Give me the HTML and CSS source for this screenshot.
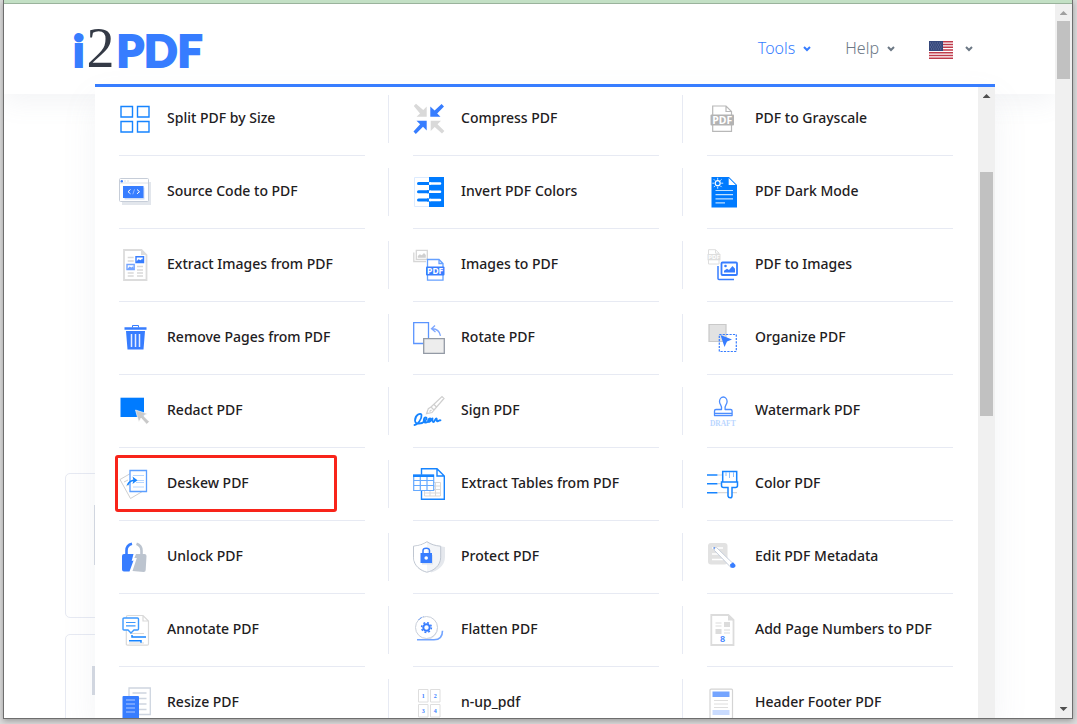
FILE: index.html
```html
<!DOCTYPE html>
<html lang="en">
<head>
<meta charset="utf-8">
<title>i2PDF</title>
<link rel="stylesheet" href="styles.css">
</head>
<body>
<div class="window">
  <div class="window-strip"></div>
  <div class="viewport">
    <div class="page">
      <header class="header">
        <a class="logo" href="#"><span>i</span><span class="logo-two">2</span><span>PDF</span></a>
        <nav class="nav">
          <button class="nav-item active" type="button">Tools <svg class="chevron" viewBox="0 0 8 6"><path d="M1 1l3 3 3-3"/></svg></button>
          <button class="nav-item" type="button">Help <svg class="chevron" viewBox="0 0 8 6"><path d="M1 1l3 3 3-3"/></svg></button>
          <button class="nav-item flag-item" type="button" aria-label="Language">
            <svg class="flag" viewBox="0 0 24 18"><path fill="#fff" d="M0 0h24v18H0z"/><path stroke="#bf3b4b" stroke-width="1.4" d="M0 .7h24M0 3.5h24M0 6.2h24M0 9h24M0 11.8h24M0 14.5h24M0 17.3h24"/><path fill="#35477b" d="M0 0h14v10H0z"/><path stroke="#8290b5" stroke-width=".8" stroke-dasharray="1 1.3" d="M1 2h12M2 4h11M1 6h12M2 8h11"/></svg>
            <svg class="chevron" viewBox="0 0 8 6"><path d="M1 1l3 3 3-3"/></svg>
          </button>
        </nav>
      </header>
      <main class="content">
        <section class="card"><div class="card-line"></div></section>
        <section class="card"><div class="card-box"></div></section>
      </main>
      <div class="menu">
        <div class="menu-body">
        <ul class="tools">
          <li><a href="#"><svg viewBox="0 0 32 32" fill="none" stroke="#1684ff" stroke-width="1.4"><path d="M2 3.5h11.500v10.500H2zM18.500 3.500H30v10.500H18.500zM2 18.500h11.500V29H2zM18.500 18.500H30V29H18.500z"/></svg>Split PDF by Size</a></li>
          <li><a href="#"><svg viewBox="0 0 32 32" fill="none"><path fill="#d9d9d9" d="M13.700 3.500v10.200H3.500L7 10.500.8 3 3 .8l7.200 6.200zM17.700 17.700H28l-3.500 3.500 6.900 6.800-2.400 2.500-7.300-6.500-4 4z"/><path fill="#377dff" d="M17.300 3.500v10.200h10.200L24.200 10.500 31 3.500 28.600 1l-7 6.500zM13.700 17.700H3.500l3.600 3.500L.5 28.400 2.800 31l7.200-7.200 3.700 3.700z"/></svg>Compress PDF</a></li>
          <li><a href="#"><svg viewBox="0 0 32 32" fill="none"><path stroke="#b8b8b8" stroke-width="1.200" d="M5.700 12V3H19l5.500 5.500V12M19 3v5.500h5.500M5.700 22v6.300h18.800V22"/><rect x="3.500" y="11.500" width="23.500" height="11" rx="1" fill="#b3b3b3"/><text x="15.200" y="20.700" class="glyph" fill="#fff" font-size="10.500">PDF</text></svg>PDF to Grayscale</a></li>

          <li><a href="#"><svg viewBox="0 0 32 32" fill="none"><path fill="#e2e6ec" d="M3 6h29v23H3z"/><rect x=".5" y="2.500" width="29" height="23" rx="1" fill="#fff" stroke="#c6cdd8"/><path stroke="#dce0e7" d="M1 7h28M5 5h2M8 5h2"/><circle cx="2.800" cy="5.200" r="1.200" fill="#377dff"/><path fill="#cfdcf5" d="M5.500 11.500h20v12h-20z"/><path fill="#377dff" d="M4 10h20.500v12H4z"/><path stroke="#fff" d="M11.500 13.500L9 15.700l2.500 2.100M18 13.500l2.500 2.200-2.500 2.100"/><path stroke="#a9c7ff" stroke-width=".8" d="M15.500 13.300l-1.700 5"/></svg>Source Code to PDF</a></li>
          <li><a href="#"><svg viewBox="0 0 32 32" fill="none"><path fill="#fff" stroke="#dcebff" d="M1.500 1.500h29v29h-29z"/><path fill="#007bff" d="M16 1h15v30H16z"/><path stroke="#007bff" stroke-width="3" stroke-linecap="round" d="M5.500 7.500H15M5.500 15.700H15M5.500 24H15"/><path stroke="#007bff" stroke-width="3" d="M14 7.500h2M14 15.700h2M14 24h2"/><path stroke="#fff" stroke-width="2.600" stroke-linecap="round" d="M17.500 7.500h9.500M17.500 15.700h9.500M17.500 24h9.500"/><path stroke="#fff" stroke-width="2.600" d="M16 7.500h2M16 15.700h2M16 24h2"/></svg>Invert PDF Colors</a></li>
          <li><a href="#"><svg viewBox="0 0 32 32" fill="none"><path fill="#007bff" d="M4.500 1H22l8 8v22.500H4.500z"/><path fill="#fff" d="M21.700 2v7h7z"/><path stroke="#bfe0ff" stroke-width="1.200" d="M8.500 14.500H26M8.500 18.700H26M8.500 22.800H26M8.500 26.800H18"/><circle cx="10.700" cy="7.200" r="2.500" stroke="#fff" stroke-width="1.200"/><path stroke="#d6eaff" d="M10.700 1.800v2M10.700 10.700v2M5.300 7.200h2M14.200 7.200h2M6.800 3.300l1.400 1.400M13.200 9.700l1.400 1.400M14.600 3.300l-1.400 1.400M8.200 9.700l-1.400 1.400"/></svg>PDF Dark Mode</a></li>

          <li><a href="#"><svg viewBox="0 0 32 32" fill="none"><path stroke="#dcdcdc" stroke-width="1.800" d="M5 1h17.500l5 5v25H5z"/><path fill="#dcdcdc" d="M22 1v5h5z"/><path stroke="#d9d9d9" stroke-width="1.300" d="M8.700 8.500h6M8.700 12h6M18 17.500h6M18 21h6M8.700 24h6M8.700 27h6M18 24h6M18 27h6"/><path fill="#fff" stroke="#377dff" stroke-width="1.400" d="M17 7.700h7.500V13.500H17z"/><path fill="#fff" stroke="#75a5ff" stroke-width="1.400" d="M8 15.500h7.200V20.500H8z"/><path fill="#377dff" d="M17 13l2.500-2.800 2 1 2-1.700 1 3.500z"/><path fill="#75a5ff" d="M8 20.500l2.500-3 2 1 1.700-1.300 1 3.300z"/></svg>Extract Images from PDF</a></li>
          <li><a href="#"><svg viewBox="0 0 32 32" fill="none"><path stroke="#d6d6d6" stroke-width="1.300" d="M3.300 1.300h11v9h-11zM.8 3.500V12.500H13"/><path fill="#d0d0d0" d="M4.800 8.800V7l2-1.800 2 1L11 4l1.800 2v2.800z"/><path stroke="#65a0ff" stroke-width="1.300" d="M14.500 18v-7.500h11.500l4 4V18M26 10.500v4h4M14.500 26v5.200H30V26"/><rect x="13" y="17.500" width="18.500" height="9" rx="1" fill="#377dff"/><text x="22.200" y="25" class="glyph" fill="#fff" font-size="8.500">PDF</text></svg>Images to PDF</a></li>
          <li><a href="#"><svg viewBox="0 0 32 32" fill="none"><path stroke="#dedede" d="M1.500 5V.7h7l3.500 3.500V5M8.500.7v3.500H12M1.500 11v4H12v-4"/><path fill="#dedede" d="M.5 5h13v6.300H.5z"/><text x="7" y="10.300" class="glyph" fill="#fff" font-size="6">PDF</text><rect x="14.500" y="13.500" width="15.500" height="12.500" rx="1" stroke="#377dff" stroke-width="1.800"/><path stroke="#377dff" stroke-width="1.500" d="M11 17v12.500q0 1 1 1h15"/><path fill="#377dff" d="M17 23.500v-1.800l3-2 2 1.300 3.500-4L28 19.700v3.800z"/><circle cx="18.500" cy="17" r="1.300" fill="#377dff"/></svg>PDF to Images</a></li>

          <li><a href="#"><svg viewBox="0 0 32 32" fill="none"><path fill="#377dff" d="M5.500 5.200h22v2.600h-22zM7 9h19l-1.500 18.500h-16z"/><path stroke="#377dff" d="M13.500 5.500v-2h6v2"/><path stroke="#e4edff" stroke-width="1.500" d="M12.500 12v13M16.500 12v13M20.500 12v13"/></svg>Remove Pages from PDF</a></li>
          <li><a href="#"><svg viewBox="0 0 32 32" fill="none"><path fill="#fff" stroke="#5b95ff" stroke-width="1.300" d="M.7.7h14.800v20.800H.7z"/><path fill="#ededed" stroke="#939aa5" stroke-width="1.300" d="M10.700 16.700h20.600v14.600H10.700z"/><path stroke="#7da7ff" stroke-width="1.300" d="M22 3.500l-3.500 3.300L22.500 10M18.500 6.800q7.500-.5 9 7"/></svg>Rotate PDF</a></li>
          <li><a href="#"><svg viewBox="0 0 32 32" fill="none"><path fill="#e2e2e2" stroke="#c9c9c9" stroke-width="1.200" d="M2 2.500h17v17H2z"/><path stroke="#377dff" stroke-width="1.200" stroke-dasharray="2.200 1.200" d="M12.300 12.500h17v17h-17z"/><path fill="#377dff" d="M13.500 13l11.500 4.500-5 2-2.500 5.500z"/></svg>Organize PDF</a></li>

          <li><a href="#"><svg viewBox="0 0 32 32" fill="none"><path fill="#007bff" d="M1.500 2.700H25V22H1.500z"/><path fill="#c9c9c9" stroke="#fff" stroke-width=".6" d="M16.500 15l12 3.800-4.200 1.900 6 6-2.600 2.600-5.700-6.300-2.200 4z"/></svg>Redact PDF</a></li>
          <li><a href="#"><svg viewBox="0 0 32 32" fill="none"><path stroke="#cfcfcf" stroke-width="1.200" d="M18 12L29 1.500l2 2L21 15zM18 12l3 3-2 2.500-5.500 1.200 1.800-5zM18.500 15l-2 1.500M21 9.500l2.500 2.500"/><path stroke="#1684ff" stroke-width="1.800" stroke-linecap="round" stroke-linejoin="round" d="M1.500 30C5 30 9 23 8.500 20 8 17 2 20 2 25.500 2 30 9 29 12 26c2-2 2-3.500.5-3.500s-3 5 0 5 4-2.500 5-4c-2-1-3.500 3.500-1.500 3.500s3-3.500 3.500-3.500c-.3 2 0 3.500 1 3.500s2-4 3-3.500c.8.500-.3 3 1 2.800s1.500-1.300 3-1"/></svg>Sign PDF</a></li>
          <li><a href="#"><svg viewBox="0 0 32 32" fill="none"><path stroke="#4c8dff" stroke-width="1.300" stroke-linejoin="round" d="M14.500 14.500c1-4-2-4.500-2-8a3.800 4.500 0 0 1 7.600 0c0 3.500-3 4-2 8h5.500q1.500 0 1.500 1.500V20.500H7.500V16q0-1.500 1.500-1.500zM7.500 18.300h17.600"/><text x="15.800" y="31" class="draft" fill="#bad6ff" font-size="7.500">DRAFT</text></svg>Watermark PDF</a></li>

          <li class="marked"><a href="#"><svg viewBox="0 0 32 32" fill="none"><path fill="#fff" stroke="#cfcfcf" d="M1 11.500L14 4l11 18.500-13.500 8zM5 14l4-2M7 18l3-1.500"/><path fill="#fff" stroke="#5c9fff" stroke-width="1.300" d="M11 2.500h16.500v21H11z"/><path stroke="#b8d7ff" d="M14 7.500h11M17 12.500h8M17 14.500h8M14 19h11"/><path stroke="#1684ff" stroke-width="1.600" d="M8.500 17q2-5 8.500-4.800"/><path fill="#1684ff" d="M13.500 8.500l5 3.700-5 3.800 1-3.800z"/></svg>Deskew PDF</a></li>
          <li><a href="#"><svg viewBox="0 0 32 32" fill="none"><path fill="#fff" stroke="#1684ff" stroke-width="1.400" d="M8.500.7H24l7.300 7.300v23.300H8.500zM24 .7V8h7.300"/><path fill="#fff" stroke="#d9d9d9" d="M11.500 14.500h16V28h-16zM11.500 18h16M11.500 21.500h16M11.500 25h16M17 14v14M22.500 14v14"/><path fill="#fff" stroke="#65a9ff" stroke-width="1.200" d="M.7 7h20v15.500H.7zM.7 12.500h20M.7 17.500h20M7.300 8v14.500M14 8v14.500"/><path fill="#1684ff" d="M0 6.500h21V9H0z"/></svg>Extract Tables from PDF</a></li>
          <li><a href="#"><svg viewBox="0 0 32 32" fill="none"><path stroke="#d8d8d8" stroke-width="1.200" d="M11 7h5M11 15.700h5M11 24.700h19"/><path stroke="#1684ff" stroke-width="1.500" d="M0 7h10.500M0 15.700h10.500M0 24.700h10.500"/><path fill="#fff" stroke="#1684ff" stroke-width="1.500" d="M15.700 3.500h14V14h-14zM14.500 14h16v3.500q0 2-2 2H25V28q0 1.800-1.800 1.800T21 28v-8.500h-4.500q-2 0-2-2z"/><path stroke="#8bbfff" d="M19 4v4M22.500 4v6M26.500 4v5"/></svg>Color PDF</a></li>

          <li><a href="#"><svg viewBox="0 0 32 32" fill="none"><path stroke="#377dff" stroke-width="2.600" d="M7.500 14V9.500Q7.500 4 13 2.700"/><path stroke="#bcc4cf" stroke-width="2.600" d="M17.500 2.700Q22.500 4.500 22.500 9.500V14"/><path fill="#377dff" d="M5 13h9.500l-1.800 7 1.800-.5-4 11H5q-2 0-2-2V15q0-2 2-2z"/><path fill="#bcc4cf" d="M17 13h8.500q2 0 2 2l-.8 14q0 2-2 2L13.500 30l4.300-13h-2.500z"/></svg>Unlock PDF</a></li>
          <li><a href="#"><svg viewBox="0 0 32 32" fill="none"><path fill="#e5e8ed" d="M12 3l20 3v10c0 9-8 14-14 15.500z"/><path fill="#f3f5f8" stroke="#bfc6d1" d="M14 .7c4 2.700 8 4 13.700 4.500v11C27.700 25 20 30 14 31.200 8 30 .5 25 .5 16.200v-11C6 4.700 10 3.400 14 .7z"/><path fill="#fff" d="M1 5.700C6 5 10 4 14 1.500v29C7 28 1 24 1 16z"/><path fill="#dce3ef" d="M9 14h11v9.500H9z"/><path fill="#377dff" d="M7.500 12h11.500v10H7.500z"/><path stroke="#377dff" stroke-width="1.500" d="M10 13V9.500Q10 7.300 13.200 7.300T16.500 9.500V13"/><circle cx="13.200" cy="17" r="1.800" fill="#fff"/></svg>Protect PDF</a></li>
          <li><a href="#"><svg viewBox="0 0 32 32" fill="none"><rect x="1" y="2" width="19.500" height="21.500" rx="3" fill="#e2e2e2"/><path stroke="#fff" stroke-width="1.500" d="M5 7h11M5 13h7M5 18.500h11"/><path fill="#fff" stroke="#c6cedb" d="M6.700 6.500l3 .2L26 22.500 23 25.500 7.500 9.500z"/><circle cx="7.300" cy="7" r=".8" fill="#377dff"/><path fill="#377dff" d="M23 23.500l3-2.200 2.500 2.700-.3 2-2 1-2.700-.5z"/></svg>Edit PDF Metadata</a></li>

          <li><a href="#"><svg viewBox="0 0 32 32" fill="none"><path fill="#fff" stroke="#d9d9d9" stroke-width="1.200" d="M9 1.500h15l5.500 5.500v23q0 1.200-1.200 1.200H8.500q-1.200 0-1.200-1.200V3q0-1.500 1.700-1.500zM24 1.500V7h5.500M11 19.500h14M10 29h15"/><path fill="#fff" stroke="#3c99ff" stroke-width="1.400" d="M5 4h13.500q1 0 1 1v10q0 1-1 1H15l-3 3-3-3H5q-1 0-1-1V5q0-1 1-1z"/><path stroke="#3c99ff" stroke-width="1.200" d="M7 8.500h9.500M7 11.800h9.500"/><path stroke="#1684ff" stroke-width="1.500" d="M13 21v2h14M10 26.800h12v2"/></svg>Annotate PDF</a></li>
          <li><a href="#"><svg viewBox="0 0 32 32" fill="none"><path fill="#e3e8f0" d="M19 4c8 5 8 16-1 21h-5z"/><circle cx="13.500" cy="13.500" r="11" fill="#fff" stroke="#c9cfda"/><path stroke="#5b95ff" d="M5.500 6q2-2.500 5-3.300" stroke-dasharray="4 1.500"/><circle cx="13.500" cy="13.500" r="3.200" stroke="#377dff" stroke-width="2"/><circle cx="13.500" cy="13.500" r="4.900" stroke="#377dff" stroke-width="1.500" stroke-dasharray="1.900 1.950"/><path stroke="#72a4ff" stroke-width="1.600" d="M4 25.700h17q8.500 0 8.500-9"/></svg>Flatten PDF</a></li>
          <li><a href="#"><svg viewBox="0 0 32 32" fill="none"><path stroke="#dcdcdc" stroke-width="1.800" d="M4.300 1h17l5.200 5v25H4.300z"/><path fill="#dcdcdc" d="M21 1v5.500h5.500zM17 8h6v5h-6zM8.500 15h6v5h-6z"/><path stroke="#dcdcdc" stroke-width="1.200" d="M8.500 9h6M8.500 12h6M17 16h6M17 19h6"/><text x="15.500" y="28" class="glyph number" fill="#377dff" font-size="9">8</text></svg>Add Page Numbers to PDF</a></li>

          <li><a href="#"><svg viewBox="0 0 32 32" fill="none"><path stroke="#ced5e0" stroke-width="1.300" d="M10 1h21.300v26.500H10zM13.500 6h14M13.500 11.500h14M13.500 17h14M13.500 22.500h14"/><rect x="3.500" y="9" width="16.500" height="23" rx="1" fill="#377dff"/><path stroke="#afcaff" stroke-width="1.200" d="M7 13h9M7 17h9M7 21h9M7 25h9"/></svg>Resize PDF</a></li>
          <li><a href="#"><svg viewBox="0 0 32 32" fill="none"><path stroke="#dedede" d="M5.500 2.500h9.500v12.500H5.500zM17.500 2.500H27v12.500h-9.500zM5.500 17.500h9.500V30H5.500zM17.500 17.500H27V30h-9.500z"/><g fill="#377dff" font-size="6" class="draft"><text x="10.200" y="11">1</text><text x="22.200" y="11">2</text><text x="10.200" y="26">3</text><text x="22.200" y="26">4</text></g></svg>n-up_pdf</a></li>
          <li><a href="#"><svg viewBox="0 0 32 32" fill="none"><rect x="3" y="2.200" width="22.500" height="29.300" rx="1" stroke="#d4d4d4" stroke-width="1.200"/><path fill="#75a5ff" d="M5.500 4.500h17V10h-17z"/><path fill="#cadcff" d="M5.500 23h17v5h-17z"/><path stroke="#dedede" d="M7 13.500h14M7 17h14M7 20.500h14"/></svg>Header Footer PDF</a></li>
        </ul>
        </div>
        <div class="scrollbar menu-scrollbar"><span class="arrow up"></span><span class="thumb"></span></div>
      </div>
    </div>
    <div class="scrollbar page-scrollbar"><span class="arrow up"></span><span class="thumb"></span><span class="arrow down"></span></div>
  </div>
</div>
</body>
</html>
```
FILE: styles.css
```css
*, *::before, *::after { box-sizing: border-box; }

body {
  margin: 0;
  height: 100vh;
  display: flex;
  overflow: hidden;
  background: #dcdcdc;
  font-family: "Noto Sans", "Open Sans", sans-serif;
  color: #1e2022;
}

.window {
  flex: 1;
  display: flex;
  flex-direction: column;
  margin: 0 4px 5px 3px;
  border: 1px solid #6e6e6e;
  border-top: 0;
  background: #fff;
  box-shadow: 0 2px 6px rgba(0, 0, 0, 0.3);
}

.window-strip {
  flex: none;
  height: 4px;
  background: #c3e0c5;
  border-bottom: 1px solid #9ab39c;
}

.viewport { flex: 1; min-height: 0; display: flex; }

.page { flex: 1; position: relative; overflow: hidden; }

.header {
  position: relative;
  display: flex;
  align-items: center;
  justify-content: space-between;
  height: 90px;
  padding: 0 82px 0 69px;
  background: #fff;
  box-shadow: 0 8px 24px rgba(140, 152, 164, 0.1);
}

.logo {
  display: flex;
  align-items: baseline;
  gap: 2px;
  font: 900 44px/56px Lato, sans-serif;
  color: #377dff;
  text-decoration: none;
  -webkit-text-stroke: 2px #377dff;
}

.logo-two {
  font: 400 56px/56px "Liberation Serif", serif;
  color: #343a46;
  -webkit-text-stroke: 0;
}

.nav { display: flex; align-items: center; gap: 34px; padding-bottom: 2px; }

.nav-item {
  display: flex;
  align-items: center;
  gap: 8px;
  padding: 0;
  border: 0;
  background: none;
  font: 300 16px/24px "Noto Sans", "Open Sans", sans-serif;
  color: #6c7885;
}

.nav-item.active { color: #377dff; }
.flag-item { gap: 12px; }
.flag { width: 24px; height: 18px; margin-top: 4px; }

.chevron {
  width: 8px;
  height: 6px;
  margin-top: 2px;
  fill: none;
  stroke: currentColor;
  stroke-width: 2;
}

.content {
  display: flex;
  flex-direction: column;
  gap: 16px;
  padding: 379px 91px 0 61px;
}

.card {
  height: 145px;
  padding: 31px 26px;
  border: 1px solid #e7eaf3;
  border-radius: 5px;
}

.card-line { height: 60px; margin-left: 2px; border-left: 1px solid #d5dae3; }
.card-box { width: 32px; height: 29px; border: 3px solid #d5dae3; }

.menu {
  position: absolute;
  top: 80px;
  left: 91px;
  right: 60px;
  bottom: 0;
  display: flex;
  border-top: 3px solid #377dff;
  background: #fff;
  box-shadow: 0 16px 32px rgba(140, 152, 164, 0.1);
}

.menu-body { flex: 1; overflow: hidden; }

.tools {
  display: grid;
  grid-template-columns: repeat(3, 1fr);
  margin: -4px 1px 0 0;
  padding: 0;
  list-style: none;
}

.tools li { position: relative; padding: 0 24px; }

.tools li:not(:nth-child(3n))::before {
  content: "";
  position: absolute;
  top: 12px;
  bottom: 13px;
  right: 0;
  border-right: 1px solid #e7eaf3;
}

.tools a {
  display: flex;
  align-items: center;
  gap: 16px;
  height: 73px;
  padding-bottom: 2px;
  border-bottom: 1px solid #e7eaf3;
  font-size: 14px;
  font-weight: 500;
  line-height: 20px;
  color: inherit;
  text-decoration: none;
}

.tools svg { flex: none; width: 32px; height: 32px; margin-top: 2px; }

.glyph, .draft { font-family: "Noto Sans", sans-serif; font-weight: 700; text-anchor: middle; }
.draft { font-family: "Liberation Serif", serif; font-weight: 700; }
.number { font-weight: 600; }

.marked::after {
  content: "";
  position: absolute;
  top: 7px;
  left: 20px;
  width: 222px;
  height: 57px;
  border: 3px solid #f8241a;
  border-radius: 3px;
  pointer-events: none;
}

.scrollbar {
  flex: none;
  display: flex;
  flex-direction: column;
  align-items: center;
  width: 17px;
  background: #f0f0f0;
}

.arrow {
  width: 8px;
  height: 4px;
  margin: 7px 0 6px;
  background: #4f4f4f;
}

.up { clip-path: polygon(50% 0, 100% 100%, 0 100%); }
.down { clip-path: polygon(0 0, 100% 0, 50% 100%); margin-top: auto; margin-bottom: 7px; }
.thumb { width: 13px; background: #c1c1c1; }
.menu-scrollbar .thumb { height: 244px; margin-top: 68px; }
.page-scrollbar .up { background: #a0a0a0; }
.page-scrollbar .thumb { height: 58px; }
```
